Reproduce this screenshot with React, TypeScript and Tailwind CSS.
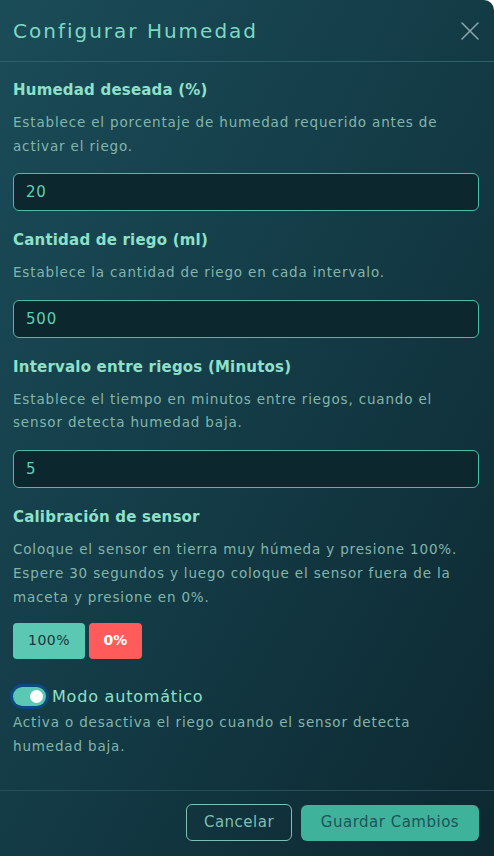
import { useState } from 'react';
import { X } from 'lucide-react';

const font = { fontFamily: '"DejaVu Sans", "Liberation Sans", sans-serif' };

const Field = ({
  label,
  help,
  value,
}: {
  label: string;
  help: string;
  value: string;
}) => (
  <div className="mb-[18px]">
    <p className="text-[15px] font-semibold leading-[22px] tracking-[0.2px] text-[#8fe0c9]">{label}</p>
    <p className="mt-[10px] text-[13.5px] leading-[23.5px] tracking-[0.84px] text-[#84b5aa]">{help}</p>
    <input
      defaultValue={value}
      className="mt-[15px] block h-[38px] w-full rounded-[6px] border border-[#47bfa5] bg-[#0d272e] px-3 text-[15px] tracking-[0.8px] text-[#5fd0b4] outline-none"
      style={font}
    />
  </div>
);

export default function App() {
  const [auto, setAuto] = useState(true);

  return (
    <div
      className="flex min-h-[856px] w-full flex-col rounded-tr-[10px] bg-gradient-to-br from-[#1a4c58] via-[#133b46] to-[#0d2830]"
      style={font}
    >
      {/* Header */}
      <div className="flex h-[62px] items-center justify-between border-b border-[#2d6068] pl-[13px] pr-[8px]">
        <h2 className="text-[20px] tracking-[2px] text-[#7fd8c2]">Configurar Humedad</h2>
        <button className="text-[#8aa5a8]">
          <X className="h-8 w-8" strokeWidth={1.2} />
        </button>
      </div>

      {/* Body */}
      <div className="flex-1 pl-[13px] pr-[15px] pt-[17px]">
        <Field
          label="Humedad deseada (%)"
          help="Establece el porcentaje de humedad requerido antes de activar el riego."
          value="20"
        />
        <Field
          label="Cantidad de riego (ml)"
          help="Establece la cantidad de riego en cada intervalo."
          value="500"
        />
        <Field
          label="Intervalo entre riegos (Minutos)"
          help="Establece el tiempo en minutos entre riegos, cuando el sensor detecta humedad baja."
          value="5"
        />

        <div className="mb-[26px]">
          <p className="text-[15px] font-semibold leading-[22px] tracking-[0.2px] text-[#8fe0c9]">
            Calibración de sensor
          </p>
          <p className="mt-[9px] text-[13.5px] leading-[24px] tracking-[0.84px] text-[#84b5aa]">
            Coloque el sensor en tierra muy húmeda y presione 100%. Espere 30 segundos y luego coloque el sensor
            fuera de la maceta y presione en 0%.
          </p>
          <div className="mt-[14px] flex gap-1">
            <button className="h-[36px] w-[72px] rounded-[4px] bg-[#5ac8b2] text-[14px] tracking-[0.5px] text-[#16383a]">
              100%
            </button>
            <button className="h-[36px] w-[53px] rounded-[4px] bg-[#ff5b5b] text-[14px] font-semibold text-white">
              0%
            </button>
          </div>
        </div>

        <div>
          <label className="flex items-center gap-[6px]">
            <button
              onClick={() => setAuto(!auto)}
              className={`flex h-[19px] w-[33px] items-center rounded-full px-[3px] shadow-[0_0_0_3px_#0b4a80] ${
                auto ? 'justify-end bg-[#5ac8b2]' : 'justify-start bg-[#3a5a60]'
              }`}
            >
              <span className="h-[13px] w-[13px] rounded-full bg-white" />
            </button>
            <span className="text-[16px] tracking-[0.8px] text-[#8fe0c9]">Modo automático</span>
          </label>
          <p className="mt-[1px] text-[13.5px] leading-[24px] tracking-[0.84px] text-[#84b5aa]">
            Activa o desactiva el riego cuando el sensor detecta humedad baja.
          </p>
        </div>
      </div>

      {/* Footer */}
      <div className="flex h-[66px] items-center justify-end gap-[9px] border-t border-[#265058] px-[15px] pb-[2px]">
        <button className="h-[37px] w-[106px] rounded-[6px] border border-[#7fbfb1] text-[15px] tracking-[0.5px] text-[#7fbfb1]">
          Cancelar
        </button>
        <button className="h-[36px] w-[178px] rounded-[6px] bg-[#3fb29c] text-[15px] tracking-[0.5px] text-[#1c5557]">
          Guardar Cambios
        </button>
      </div>
    </div>
  );
}
